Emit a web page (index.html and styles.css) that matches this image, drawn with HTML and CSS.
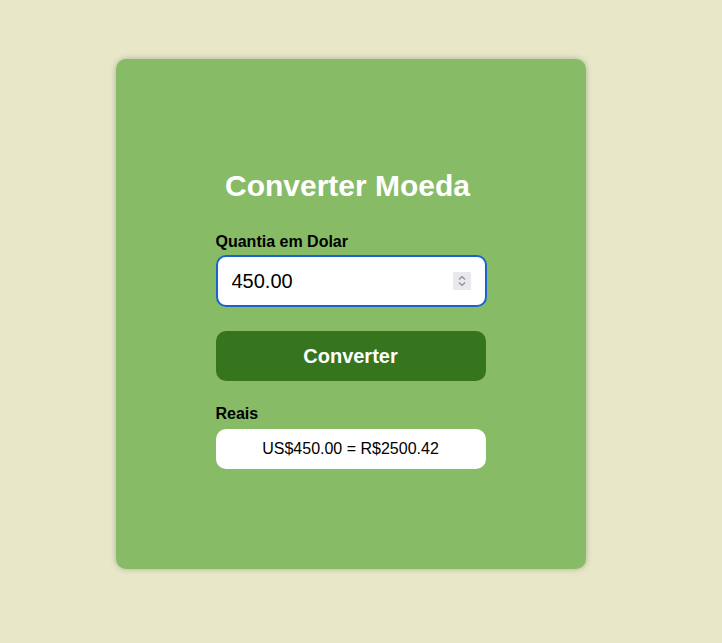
FILE: index.html
```html
<!DOCTYPE html>
<html lang="pt">
<head>
<meta charset="utf-8">
<title>Converter Moeda</title>
<link rel="stylesheet" href="styles.css">
</head>
<body>
<main class="card">
  <div class="content">
    <h1 class="title">Converter Moeda</h1>
    <label class="label label-in" for="valor">Quantia em Dolar</label>
    <div class="field">
      <input class="input" id="valor" type="number" value="450.00">
      <span class="spin" aria-hidden="true">
        <svg width="18" height="18" viewBox="0 0 18 18">
          <path d="M6 7.5 L9 4.5 L12 7.5" fill="none" stroke="#8a8a90" stroke-width="1.2"/>
          <path d="M6 10.5 L9 13.5 L12 10.5" fill="none" stroke="#8a8a90" stroke-width="1.2"/>
        </svg>
      </span>
    </div>
    <button class="btn" type="button">Converter</button>
    <div class="label">Reais</div>
    <div class="result">US$450.00 = R$2500.42</div>
  </div>
</main>
</body>
</html>
```
FILE: styles.css
```css
html, body {
  margin: 0;
  padding: 0;
}
body {
  background: #e8e8c9;
  font-family: "Liberation Sans", Arial, sans-serif;
  min-height: 643px;
  padding-top: 59px;
  box-sizing: border-box;
}
.card {
  margin-left: 116px;
  width: 470px;
  height: 510px;
  background: #88bb66;
  border-radius: 10px;
  box-shadow: 0 0 6px rgba(0,0,0,0.25);
  display: flex;
  justify-content: center;
  padding-top: 107px;
  box-sizing: border-box;
}
.content {
  width: 271px;
  display: flex;
  flex-direction: column;
}
.title {
  margin: 0 0 27px;
  color: #fff;
  font-size: 30px;
  font-weight: bold;
  text-align: center;
  line-height: 40px;
  padding-right: 7px;
}
.label {
  font-size: 16px;
  font-weight: bold;
  color: #000;
  line-height: 18px;
  margin-bottom: 6px;
}
.label-in {
  margin-bottom: 4px;
}
.field {
  position: relative;
  margin-bottom: 24px;
}
.input {
  display: block;
  width: 100%;
  height: 52px;
  box-sizing: border-box;
  border: 2px solid #1a62d2;
  border-radius: 10px;
  background: #fff;
  padding: 0 14px;
  font-family: "Liberation Sans", Arial, sans-serif;
  font-size: 20px;
  color: #000;
  outline: none;
  -moz-appearance: textfield;
}
.input::-webkit-inner-spin-button,
.input::-webkit-outer-spin-button {
  -webkit-appearance: none;
  margin: 0;
}
.spin {
  position: absolute;
  right: 16px;
  top: 17px;
  width: 18px;
  height: 18px;
  background: #e9e9ed;
  display: block;
}
.spin svg {
  display: block;
}
.btn {
  height: 50px;
  width: 270px;
  border: none;
  border-radius: 10px;
  background: #36751e;
  color: #fff;
  font-family: "Liberation Sans", Arial, sans-serif;
  font-size: 20px;
  font-weight: bold;
  margin-bottom: 24px;
  padding: 0;
}
.result {
  width: 270px;
  height: 40px;
  background: #fff;
  border-radius: 10px;
  font-size: 16px;
  line-height: 40px;
  text-align: center;
  color: #000;
}
```
